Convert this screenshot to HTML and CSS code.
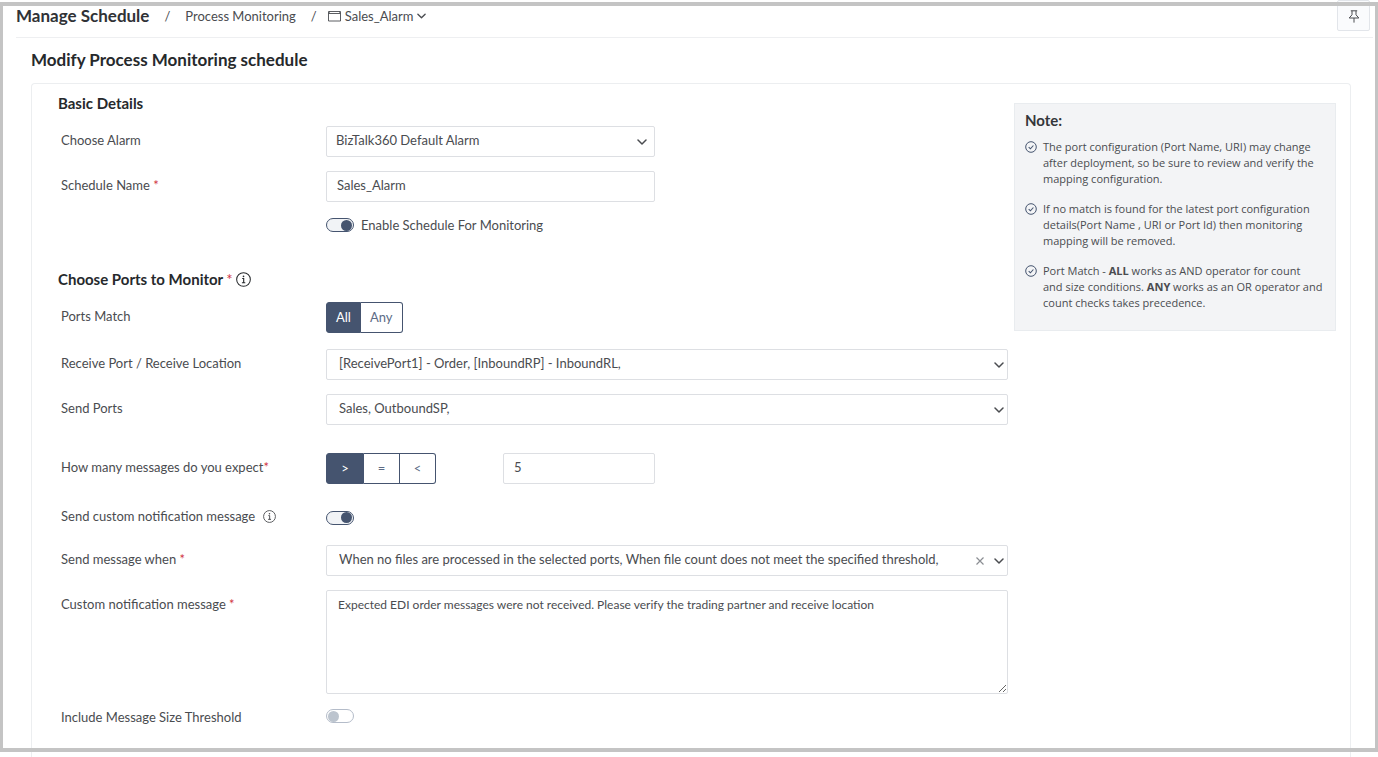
FILE: index.html
```html
<!DOCTYPE html>
<html lang="en">
<head>
<meta charset="utf-8">
<title>Manage Schedule</title>
<link rel="stylesheet" href="styles.css">
</head>
<body>
<svg class="sprite" aria-hidden="true">
  <symbol id="chevron" viewBox="0 0 10 6"><path d="M1 1l4 4 4-4" fill="none" stroke="currentColor" stroke-width="1.5" stroke-linecap="round" stroke-linejoin="round"/></symbol>
  <symbol id="info" viewBox="0 0 16 16"><circle cx="8" cy="8" r="7.3" fill="none" stroke="currentColor" stroke-width="1.1"/><path d="M6.6 6.9h1.6v4.6M6.3 11.5h3.6" fill="none" stroke="currentColor" stroke-width="1.2"/><circle cx="8" cy="4.6" r=".9" fill="currentColor"/></symbol>
  <symbol id="check" viewBox="0 0 12 12"><circle cx="6" cy="6" r="5.3" fill="none" stroke="currentColor" stroke-width="1"/><path d="M3.7 6.2l1.7 1.6 3-3.3" fill="none" stroke="currentColor" stroke-width="1.1"/></symbol>
</svg>

<div class="page">
  <header class="topbar">
    <nav class="crumbs" aria-label="Breadcrumb">
      <h1 class="crumb-title">Manage Schedule</h1>
      <span class="slash">/</span>
      <a class="crumb" href="#">Process Monitoring</a>
      <span class="slash">/</span>
      <button class="crumb crumb-menu" type="button">
        <svg class="icon-window" viewBox="0 0 13 12" aria-hidden="true"><path d="M.5 1.5h12v9.5H.5zM.5 3.5h12" fill="none" stroke="currentColor" stroke-width=".9"/><path d="M1.5 1v2M11.5 1v2" fill="none" stroke="currentColor" stroke-width=".6"/></svg>
        Sales_Alarm
        <svg class="chevron chevron-small" aria-hidden="true"><use href="#chevron"/></svg>
      </button>
    </nav>
    <button class="pin" type="button" aria-label="Pin">
      <svg class="icon-pin" viewBox="0 0 12 13" aria-hidden="true"><path d="M2.8 .8h6.4M4 .8v4L1.2 8h9.6L8 4.8v-4M6 8v4.6" fill="none" stroke="currentColor" stroke-width="1"/></svg>
    </button>
  </header>

  <main class="content">
    <h2 class="page-title">Modify Process Monitoring schedule</h2>
    <form class="panel">
      <div class="fields">
        <h3 class="section-title">Basic Details</h3>

        <div class="row">
          <label class="label" for="alarm">Choose Alarm</label>
          <div class="select half">
            <select class="control" id="alarm"><option>BizTalk360 Default Alarm</option></select>
            <svg class="chevron" aria-hidden="true"><use href="#chevron"/></svg>
          </div>
        </div>
        <div class="row">
          <label class="label" for="name">Schedule Name <span class="req">*</span></label>
          <input class="control half" id="name" type="text" value="Sales_Alarm">
        </div>
        <div class="row row-toggle">
          <span></span>
          <label class="toggle-label"><input class="toggle" type="checkbox" role="switch" checked>Enable Schedule For Monitoring</label>
        </div>

        <h3 class="section-title section-ports">Choose Ports to Monitor <span class="req">*</span><svg class="icon-info large" aria-hidden="true"><use href="#info"/></svg></h3>

        <div class="row row-match">
          <span class="label">Ports Match</span>
          <div class="segments" role="group" aria-label="Ports Match">
            <button class="segment active" type="button" aria-pressed="true">All</button>
            <button class="segment" type="button" aria-pressed="false">Any</button>
          </div>
        </div>
        <div class="row">
          <label class="label" for="receive">Receive Port / Receive Location</label>
          <div class="select multi">
            <select class="control" id="receive"><option>[ReceivePort1] - Order, [InboundRP] - InboundRL,</option></select>
            <svg class="chevron" aria-hidden="true"><use href="#chevron"/></svg>
          </div>
        </div>
        <div class="row">
          <label class="label" for="send">Send Ports</label>
          <div class="select multi">
            <select class="control" id="send"><option>Sales, OutboundSP,</option></select>
            <svg class="chevron" aria-hidden="true"><use href="#chevron"/></svg>
          </div>
        </div>
        <div class="row row-count">
          <label class="label" for="count">How many messages do you expect<span class="req">*</span></label>
          <div class="compare half">
            <div class="segments operators" role="group" aria-label="Comparison">
              <button class="segment active" type="button" aria-pressed="true">&gt;</button>
              <button class="segment" type="button" aria-pressed="false">=</button>
              <button class="segment" type="button" aria-pressed="false">&lt;</button>
            </div>
            <input class="control count" id="count" type="text" value="5">
          </div>
        </div>
        <div class="row row-custom">
          <label class="label" for="custom">Send custom notification message <svg class="icon-info" aria-hidden="true"><use href="#info"/></svg></label>
          <input class="toggle" id="custom" type="checkbox" role="switch" checked>
        </div>
        <div class="row">
          <label class="label" for="when">Send message when <span class="req">*</span></label>
          <div class="select multi">
            <select class="control" id="when"><option>When no files are processed in the selected ports, When file count does not meet the specified threshold,</option></select>
            <button class="clear" type="button" aria-label="Clear"><svg class="icon-clear" viewBox="0 0 8 8" aria-hidden="true"><path d="M.5.5l7 7M7.5.5l-7 7" fill="none" stroke="currentColor" stroke-width="1.2"/></svg></button>
            <svg class="chevron" aria-hidden="true"><use href="#chevron"/></svg>
          </div>
        </div>
        <div class="row">
          <label class="label" for="message">Custom notification message <span class="req">*</span></label>
          <textarea class="control message" id="message">Expected EDI order messages were not received. Please verify the trading partner and receive location</textarea>
        </div>
        <div class="row row-toggle">
          <label class="label" for="size">Include Message Size Threshold</label>
          <input class="toggle" id="size" type="checkbox" role="switch">
        </div>
      </div>

      <aside class="note">
        <h4 class="note-title">Note:</h4>
        <ul class="note-list">
          <li class="note-item"><svg class="icon-check" aria-hidden="true"><use href="#check"/></svg><span>The port configuration (Port Name, URI) may change after deployment, so be sure to review and verify the mapping configuration.</span></li>
          <li class="note-item"><svg class="icon-check" aria-hidden="true"><use href="#check"/></svg><span>If no match is found for the latest port configuration details(Port Name , URI or Port Id) then monitoring mapping will be removed.</span></li>
          <li class="note-item"><svg class="icon-check" aria-hidden="true"><use href="#check"/></svg><span>Port Match - <b>ALL</b> works as AND operator for count<br>and size conditions. <b>ANY</b> works as an OR operator and count checks takes precedence.</span></li>
        </ul>
      </aside>
    </form>
  </main>
</div>
<div class="frame"></div>
</body>
</html>
```
FILE: styles.css
```css
* { box-sizing: border-box; }

body {
  margin: 0;
  font-family: Lato, "Open Sans", sans-serif;
  font-size: 13px;
  line-height: 16px;
  color: #4a4c50;
  background: #fff;
}

h1, h2, h3, h4, ul { margin: 0; padding: 0; }

button, input, select, textarea {
  margin: 0;
  font: inherit;
  color: inherit;
}

.sprite { display: none; }

.page {
  display: flex;
  flex-direction: column;
  min-height: 100vh;
}

/* Border that is drawn over the page edges */
.frame {
  position: absolute;
  inset: 2px 0 5px;
  border: 4px solid #c4c4c4;
  border-width: 4px 3px;
  pointer-events: none;
}

.topbar {
  display: flex;
  justify-content: space-between;
  margin: 0 5px 0 16px;
  padding-right: 3px;
  height: 38px;
  border-bottom: 1px solid #eeeff1;
}

.crumbs {
  display: flex;
  align-items: center;
  height: 32px;
}

.crumb-title {
  font-size: 17px;
  font-weight: 700;
  line-height: 20px;
  color: #303236;
}

.slash { padding: 0 15px; }

.crumb { color: inherit; text-decoration: none; }

.crumb-menu {
  display: flex;
  align-items: center;
  gap: 4px;
  padding: 0;
  border: 0;
  background: none;
}

.slash + .crumb-menu { margin-left: -4px; }

.icon-window { width: 13px; height: 12px; }

.pin {
  width: 33px;
  height: 31px;
  padding: 4px 0 0;
  border: 1px solid #e2e5ea;
  border-radius: 2px;
  background: #fafbfd;
}

.icon-pin { width: 12px; height: 13px; }

.content {
  display: flex;
  flex: 1;
  flex-direction: column;
  padding: 12px 27px 0 31px;
}

.page-title {
  margin-bottom: 13px;
  font-size: 17px;
  line-height: 20px;
  color: #26292c;
}

.panel {
  display: grid;
  flex: 1;
  grid-template-columns: 1fr 322px;
  gap: 6px;
  padding: 9px 14px 20px 26px;
  border: 1px solid #eceef0;
  border-bottom: 0;
  border-radius: 4px 4px 0 0;
}

.section-title {
  margin-bottom: 13px;
  font-size: 15px;
  line-height: 20px;
  color: #26292c;
}

.section-ports {
  display: flex;
  align-items: center;
  gap: 3px;
  margin-top: 36px;
}

.row {
  display: grid;
  grid-template-columns: 265px 1fr;
  align-items: start;
  margin: 0 0 14px 3px;
}

.label { padding-top: 6px; }

.req {
  font-weight: 400;
  color: #d0343f;
}

.control {
  display: block;
  width: 100%;
  height: 31px;
  padding: 0 10px 4px;
  border: 1px solid #dddfe3;
  border-radius: 2px;
  background: #fff;
  appearance: none;
  outline: 0;
}

.half { width: 329px; }

.select { position: relative; }

.select .control { padding: 0 32px 4px 9px; }

.select.multi .control { padding-left: 12px; }

.chevron {
  width: 10px;
  height: 6px;
}

.chevron-small { width: 9px; }

.select .chevron {
  position: absolute;
  top: 13px;
  right: 8px;
  pointer-events: none;
}

.select.multi .chevron { right: 4px; }

.clear {
  position: absolute;
  top: 6px;
  right: 20px;
  width: 16px;
  height: 18px;
  padding: 0;
  border: 0;
  background: none;
  color: #8b8e93;
}

.icon-clear { width: 8px; height: 8px; }

.toggle {
  display: flex;
  align-items: center;
  width: 28px;
  height: 14px;
  padding: 0 1px;
  border: 1px solid #b4bcc9;
  border-radius: 7px;
  background: #fff;
  appearance: none;
}

.toggle::before {
  content: "";
  width: 11px;
  height: 11px;
  border-radius: 50%;
  background: #bcc4ce;
}

.toggle:checked {
  justify-content: flex-end;
  border-color: #45546f;
  background: #f1f3f6;
}

.toggle:checked::before { background: #45546f; }

.toggle-label {
  display: flex;
  align-items: center;
  gap: 7px;
}

.row-toggle { margin-top: 15px; }

.row-toggle .label { padding: 0; }

.row-match { margin-bottom: 16px; }

.segments { display: flex; }

.segment {
  height: 31px;
  padding: 0 9px 2px;
  border: 1px solid #45546f;
  border-left-width: 0;
  background: #fff;
  color: #5d6b85;
}

.segment:first-child {
  border-left-width: 1px;
  border-radius: 3px 0 0 3px;
}

.segment:last-child { border-radius: 0 3px 3px 0; }

.segment.active {
  background: #45546f;
  color: #fff;
}

.operators .segment { width: 36px; }

.operators .segment:first-child { width: 38px; }

.compare {
  display: flex;
  justify-content: space-between;
}

.count { width: 152px; }

.row-count { margin: 28px 0 24px 3px; }

.row-custom {
  align-items: center;
  margin-bottom: 18px;
}

.row-custom .label {
  display: flex;
  align-items: center;
  gap: 8px;
  padding: 0 0 3px;
}

.icon-info { width: 13px; height: 13px; }

.icon-info.large { width: 15px; height: 15px; }

.message {
  height: 104px;
  padding: 6px 11px;
  font-size: 12px;
  resize: vertical;
}

.note {
  align-self: start;
  margin-top: 10px;
  padding: 7px 10px 19px;
  border: 1px solid #e9ecef;
  background: #f3f4f6;
}

.note-title {
  margin-bottom: 10px;
  font-size: 15px;
  line-height: 18px;
  color: #33363a;
}

.note-list {
  display: flex;
  flex-direction: column;
  gap: 14px;
  font-family: "Open Sans", sans-serif;
  font-size: 11px;
  list-style: none;
}

.note-item {
  display: flex;
  gap: 6px;
}

.icon-check {
  flex: none;
  width: 12px;
  height: 12px;
  margin-top: 2px;
  color: #45546f;
}
```
